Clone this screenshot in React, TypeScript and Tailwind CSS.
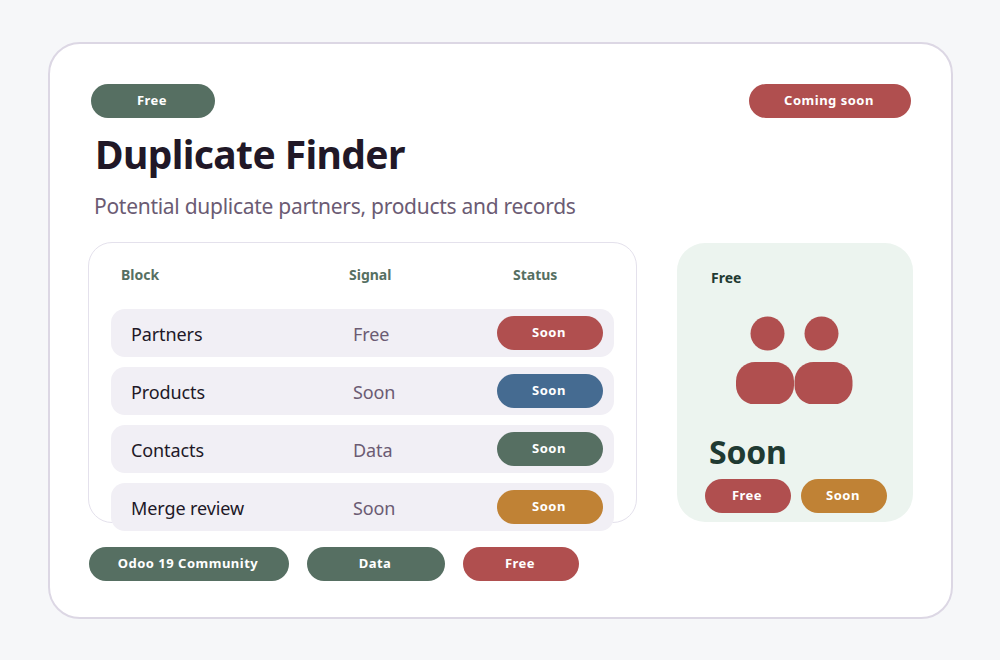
const sans = "font-['Noto_Sans','Open_Sans',sans-serif]";

function Pill({ label, color, width }: { label: string; color: string; width: string }) {
  return (
    <div className={`flex h-[34px] items-center justify-center rounded-full pr-[2px] text-[13px] font-bold tracking-[0.5px] text-white ${color} ${width}`}>
      {label}
    </div>
  );
}

const rows = [
  { name: 'Partners', signal: 'Free', color: 'bg-[#b04f4f]' },
  { name: 'Products', signal: 'Soon', color: 'bg-[#456b91]' },
  { name: 'Contacts', signal: 'Data', color: 'bg-[#566f62]' },
  { name: 'Merge review', signal: 'Soon', color: 'bg-[#c08235]' },
];

export default function App() {
  return (
    <div className={`h-[660px] w-[1000px] overflow-hidden bg-[#f6f7f9] pl-[48px] pt-[42px] ${sans}`}>
      <div className="h-[577px] w-[905px] rounded-[32px] border-2 border-[#dcd7e4] bg-white pl-[38px] pt-[40px]">
        <div className="ml-[3px] flex w-[820px] justify-between">
          <Pill label="Free" color="bg-[#566f62]" width="w-[124px]" />
          <Pill label="Coming soon" color="bg-[#b04f4f]" width="w-[162px]" />
        </div>
        <h1 className="ml-[7px] mt-[9px] text-[39px] font-bold leading-[54px] tracking-[-0.6px] text-[#211827]">Duplicate Finder</h1>
        <p className="ml-[6px] mt-[10px] text-[21px] leading-[30px] tracking-[-0.28px] text-[#6b5b73]">Potential duplicate partners, products and records</p>

        <div className="mt-[21px] flex items-start">
          <div className="h-[281px] w-[549px] rounded-[24px] border border-[#e4e1ec] bg-white pl-[22px] pt-[19px]">
            <div className="flex h-[24px] items-center text-[14px] font-bold text-[#566f62]">
              <span className="ml-[10px] w-[228px]">Block</span>
              <span className="w-[164px]">Signal</span>
              <span>Status</span>
            </div>
            <div className="mt-[23px] flex w-[503px] flex-col gap-[10px]">
              {rows.map((row) => (
                <div key={row.name} className="flex h-[48px] items-center rounded-[14px] bg-[#f1eff5] pl-[20px] text-[18px] tracking-[-0.1px]">
                  <span className="w-[222px] pt-[2px] text-[#211827]">{row.name}</span>
                  <span className="w-[144px] pt-[2px] text-[#6b5b73]">{row.signal}</span>
                  <Pill label="Soon" color={row.color} width="w-[106px]" />
                </div>
              ))}
            </div>
          </div>

          <div className="ml-[40px] mt-[1px] flex h-[279px] w-[236px] flex-col rounded-[28px] bg-[#ecf4ef] pt-[25px]">
            <span className="ml-[34px] text-[14px] font-bold leading-[20px] text-[#1f3a32]">Free</span>
            <svg className="ml-[59px] mt-[26px]" width="118" height="90" viewBox="0 0 118 90">
              <circle cx="31.5" cy="19.5" r="17" fill="#b04f4f" />
              <circle cx="85.5" cy="19.5" r="17" fill="#b04f4f" />
              <rect x="0" y="48" width="58" height="42.5" rx="19" fill="#b04f4f" />
              <rect x="58.5" y="48" width="58" height="42.5" rx="19" fill="#b04f4f" />
            </svg>
            <span className="ml-[32px] mt-[27px] text-[32px] font-bold leading-[42px] tracking-[-0.2px] text-[#1f3a32]">Soon</span>
            <div className="ml-[28px] mt-[6px] flex gap-[10px]">
              <Pill label="Free" color="bg-[#b04f4f]" width="w-[86px]" />
              <Pill label="Soon" color="bg-[#c08235]" width="w-[86px]" />
            </div>
          </div>
        </div>

        <div className="ml-[1px] mt-[24px] flex gap-[18px]">
          <Pill label="Odoo 19 Community" color="bg-[#566f62]" width="w-[200px]" />
          <Pill label="Data" color="bg-[#566f62]" width="w-[138px]" />
          <Pill label="Free" color="bg-[#b04f4f]" width="w-[116px]" />
        </div>
      </div>
    </div>
  );
}
